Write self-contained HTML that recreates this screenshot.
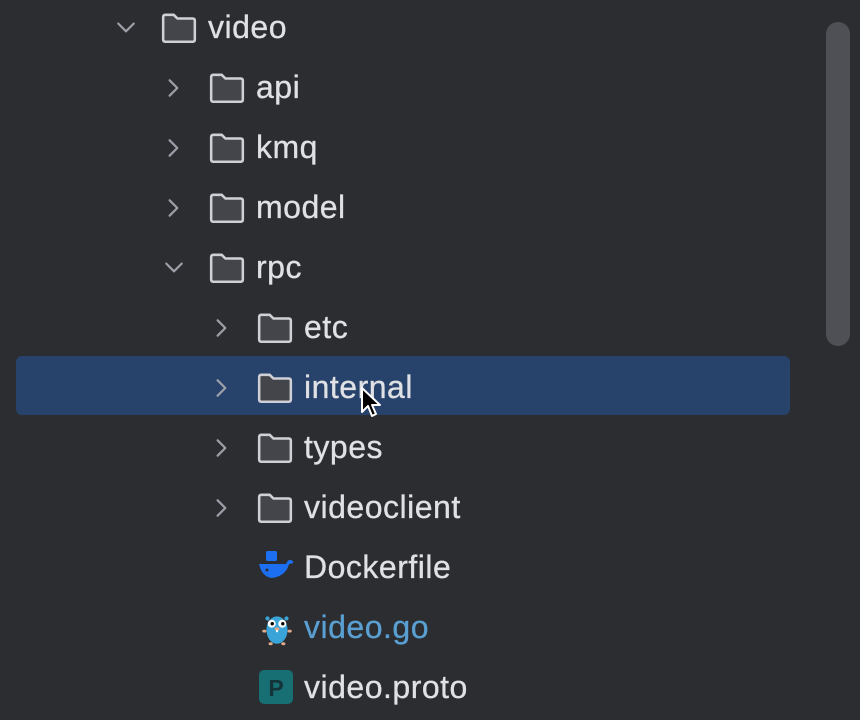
<!DOCTYPE html>
<html><head><style>
body{margin:0;width:860px;height:714px;background:#2b2d30;overflow:hidden;font-family:"Liberation Sans",sans-serif;position:relative}
.row{position:absolute;left:0;height:60px;width:860px}
.t{position:absolute;top:9px;font-size:32px;color:#dfe1e5;line-height:36px;letter-spacing:0.5px;-webkit-text-stroke:0.3px #dfe1e5}
.ic{position:absolute;top:12px}
.ch{position:absolute;top:17px}
.sel{position:absolute;left:16px;top:356px;width:774px;height:59px;background:#27426b;border-radius:6px}
.sb{position:absolute;left:826px;top:22px;width:24px;height:324px;background:#4e5055;border-radius:12px}
</style></head><body>
<div class="sel"></div>
<div class="sb"></div>
<svg width="0" height="0" style="position:absolute"><defs>
<symbol id="f" viewBox="0 0 36 30"><path d="M3 4.5 Q3 2.5 5 2.5 H13 L16.5 6 H31 Q33 6 33 8 V26 Q33 28 31 28 H5 Q3 28 3 26 Z" fill="#43454a" stroke="#ced0d6" stroke-width="2.4" stroke-linejoin="round"/></symbol>
<symbol id="r" viewBox="0 0 20 20"><path d="M6 3 L13 10 L6 17" fill="none" stroke="#9da0a8" stroke-width="2" stroke-linecap="round" stroke-linejoin="round"/></symbol>
<symbol id="d" viewBox="0 0 20 20"><path d="M3 6 L10 13 L17 6" fill="none" stroke="#9da0a8" stroke-width="2" stroke-linecap="round" stroke-linejoin="round"/></symbol>
</defs></svg>

<div class="row" style="top:0"><svg class="ch" style="left:115px" width="22" height="22"><use href="#d"/></svg><svg class="ic" style="left:160px" width="38" height="32"><use href="#f"/></svg><div class="t" style="left:208px">video</div></div>
<div class="row" style="top:60px"><svg class="ch" style="left:163px" width="22" height="22"><use href="#r"/></svg><svg class="ic" style="left:208px" width="38" height="32"><use href="#f"/></svg><div class="t" style="left:256px">api</div></div>
<div class="row" style="top:120px"><svg class="ch" style="left:163px" width="22" height="22"><use href="#r"/></svg><svg class="ic" style="left:208px" width="38" height="32"><use href="#f"/></svg><div class="t" style="left:256px">kmq</div></div>
<div class="row" style="top:180px"><svg class="ch" style="left:163px" width="22" height="22"><use href="#r"/></svg><svg class="ic" style="left:208px" width="38" height="32"><use href="#f"/></svg><div class="t" style="left:256px">model</div></div>
<div class="row" style="top:240px"><svg class="ch" style="left:163px" width="22" height="22"><use href="#d"/></svg><svg class="ic" style="left:208px" width="38" height="32"><use href="#f"/></svg><div class="t" style="left:256px">rpc</div></div>
<div class="row" style="top:300px"><svg class="ch" style="left:211px" width="22" height="22"><use href="#r"/></svg><svg class="ic" style="left:256px" width="38" height="32"><use href="#f"/></svg><div class="t" style="left:304px">etc</div></div>
<div class="row" style="top:360px"><svg class="ch" style="left:211px" width="22" height="22"><use href="#r"/></svg><svg class="ic" style="left:256px" width="38" height="32"><use href="#f"/></svg><div class="t" style="left:304px">internal</div>
<svg style="position:absolute;left:360px;top:26px" width="24" height="34" viewBox="0 0 24 34"><path d="M2 2 V26 L8 20 L12 30 L16 28 L12 19 H20 Z" fill="#000" stroke="#fff" stroke-width="2" stroke-linejoin="round"/></svg></div>
<div class="row" style="top:420px"><svg class="ch" style="left:211px" width="22" height="22"><use href="#r"/></svg><svg class="ic" style="left:256px" width="38" height="32"><use href="#f"/></svg><div class="t" style="left:304px">types</div></div>
<div class="row" style="top:480px"><svg class="ch" style="left:211px" width="22" height="22"><use href="#r"/></svg><svg class="ic" style="left:256px" width="38" height="32"><use href="#f"/></svg><div class="t" style="left:304px">videoclient</div></div>
<div class="row" style="top:540px"><svg class="ic" style="left:258px;top:10px" width="38" height="34" viewBox="0 0 38 34"><rect x="8" y="1" width="11" height="10" rx="1.5" fill="#1d6ff2"/><path d="M1 14 H28 Q30 9 33 10 Q36 11 35 13 Q33 14 31 14 Q28 26 14 28 Q4 27 1 14 Z" fill="#1d6ff2"/><circle cx="9" cy="20" r="1.5" fill="#2b2d30"/></svg><div class="t" style="left:304px">Dockerfile</div></div>
<div class="row" style="top:600px"><svg class="ic" style="left:260px;top:10px" width="34" height="38" viewBox="0 0 32 36"><ellipse cx="16" cy="19" rx="10" ry="13" fill="#3aa4d8"/><circle cx="7" cy="8" r="2" fill="#3aa4d8"/><circle cx="25" cy="8" r="2" fill="#3aa4d8"/><circle cx="11" cy="13" r="3.8" fill="#fff"/><circle cx="21" cy="13" r="3.8" fill="#fff"/><circle cx="11.5" cy="13" r="1.6" fill="#000"/><circle cx="21.5" cy="13" r="1.6" fill="#000"/><ellipse cx="16" cy="18" rx="2.3" ry="1.6" fill="#e0a988"/><rect x="15" y="19" width="2" height="2" fill="#fff"/><ellipse cx="4" cy="20" rx="2" ry="1.4" fill="#e0a988"/><ellipse cx="28" cy="20" rx="2" ry="1.4" fill="#e0a988"/><ellipse cx="10" cy="32" rx="2" ry="1.4" fill="#e0a988"/><ellipse cx="22" cy="32" rx="2" ry="1.4" fill="#e0a988"/></svg><div class="t" style="left:304px;color:#5a9fd2;-webkit-text-stroke:0.3px #5a9fd2">video.go</div></div>
<div class="row" style="top:660px"><svg class="ic" style="left:258px;top:9px" width="36" height="36" viewBox="0 0 36 36"><rect x="1" y="1" width="34" height="34" rx="5" fill="#176e73"/><text x="18" y="27" text-anchor="middle" font-family="Liberation Sans,sans-serif" font-weight="bold" font-size="23" fill="#14343a">P</text></svg><div class="t" style="left:304px">video.proto</div></div>
</body></html>
